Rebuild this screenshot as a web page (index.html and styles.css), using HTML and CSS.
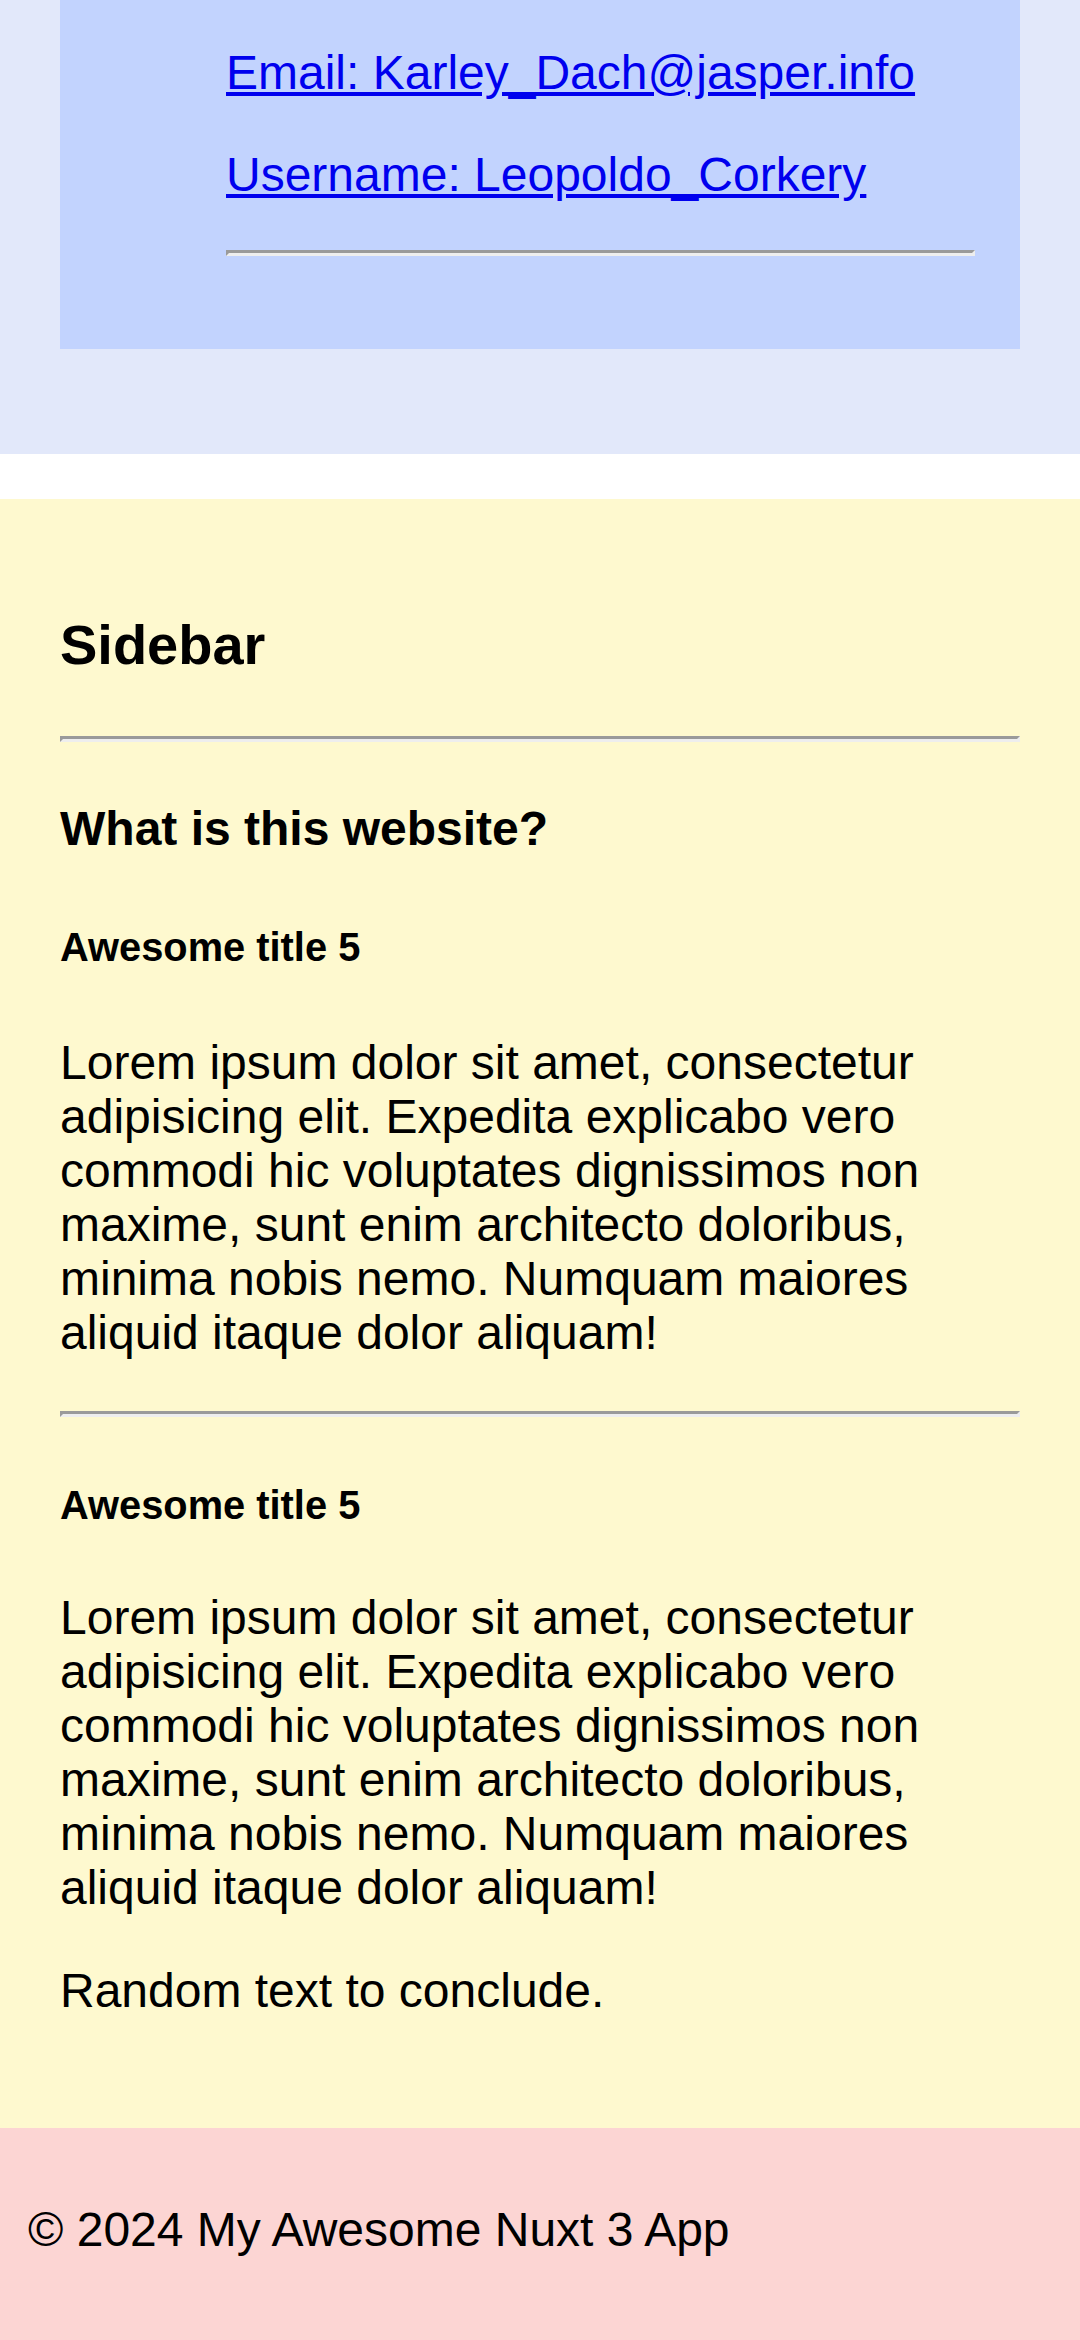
FILE: index.html
```html
<!DOCTYPE html>
<html lang="en">
<head>
<meta charset="utf-8">
<title>My Awesome Nuxt 3 App</title>
<link rel="stylesheet" href="styles.css">
</head>
<body>
<section class="profile">
  <div class="card">
    <ul class="links">
      <li><a href="#">Email: Karley_Dach@jasper.info</a></li>
      <li><a href="#">Username: Leopoldo_Corkery</a></li>
      <li><hr class="rule card-rule"></li>
    </ul>
  </div>
</section>
<aside class="sidebar">
  <h2 class="sidebar-title">Sidebar</h2>
  <hr class="rule rule-top">
  <h3 class="question">What is this website?</h3>
  <h5 class="item-title first">Awesome title 5</h5>
  <p class="item-text first-text">Lorem ipsum dolor sit amet, consectetur adipisicing elit. Expedita explicabo vero commodi hic voluptates dignissimos non maxime, sunt enim architecto doloribus, minima nobis nemo. Numquam maiores aliquid itaque dolor aliquam!</p>
  <hr class="rule rule-mid">
  <h5 class="item-title second">Awesome title 5</h5>
  <p class="item-text second-text">Lorem ipsum dolor sit amet, consectetur adipisicing elit. Expedita explicabo vero commodi hic voluptates dignissimos non maxime, sunt enim architecto doloribus, minima nobis nemo. Numquam maiores aliquid itaque dolor aliquam!</p>
  <p class="conclude">Random text to conclude.</p>
</aside>
<footer class="footer">
  <p class="copy">© 2024 My Awesome Nuxt 3 App</p>
</footer>
</body>
</html>
```

FILE: styles.css
```css
html, body {
  margin: 0;
  padding: 0;
  background: #ffffff;
}

body {
  font-family: "Liberation Sans", Arial, sans-serif;
  font-size: 48px;
  line-height: 54px;
  color: #000000;
}

.profile {
  background: #e2e8fa;
  padding: 0 60px 105px;
}

.card {
  background: #c2d3fe;
  padding: 46px 45px 93px 166px;
}

.links {
  list-style: none;
  margin: 0;
  padding: 0;
}

.links li + li {
  margin-top: 48px;
}

.links a {
  color: #0000ee;
  text-decoration: underline;
}

.rule {
  display: block;
  height: 0;
  margin: 0;
  border-style: solid;
  border-width: 3px;
  border-color: #9a9a9a #eeeeee #eeeeee #9a9a9a;
}

.card-rule {
  margin-top: 2px;
}

.sidebar {
  background: #fef9cf;
  margin-top: 45px;
  padding: 114px 60px 110px;
}

.sidebar-title {
  margin: 0;
  font-size: 56px;
  line-height: 64px;
  font-weight: bold;
}

.rule-top {
  margin-top: 59px;
}

.question {
  margin: 60px 0 0;
  font-size: 48px;
  line-height: 54px;
  font-weight: bold;
}

.item-title {
  margin: 0;
  font-size: 39.84px;
  line-height: 46px;
  font-weight: bold;
}

.item-title.first {
  margin-top: 68px;
}

.item-title.second {
  margin-top: 65px;
}

.item-text {
  margin: 0;
}

.first-text {
  margin-top: 66px;
}

.second-text {
  margin-top: 63px;
}

.rule-mid {
  margin-top: 51px;
}

.conclude {
  margin: 49px 0 0;
}

.footer {
  background: #fcd5d3;
  padding: 75px 28px 90px;
}

.copy {
  margin: 0;
}
```
